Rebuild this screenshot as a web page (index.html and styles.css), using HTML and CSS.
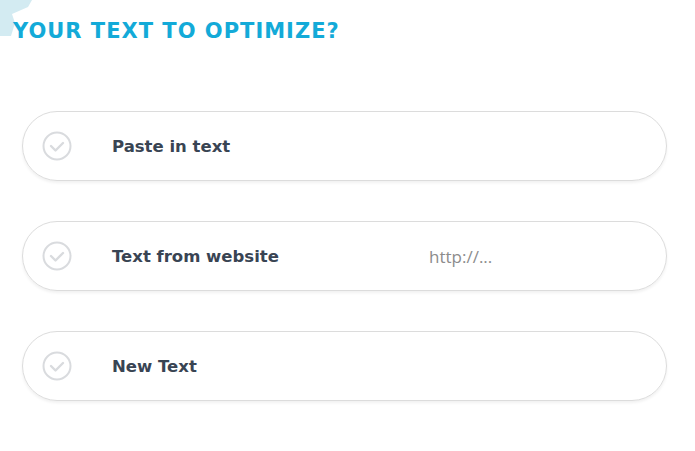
FILE: index.html
```html
<!DOCTYPE html>
<html>
<head>
<meta charset="utf-8">
<link rel="stylesheet" href="styles.css">
</head>
<body>
<svg class="deco" width="40" height="40" viewBox="0 0 40 40"><polygon points="0,0 32,0 28,7 12,14 15,23 11,36 0,36" fill="#d3ebf2"/></svg>
<h1 class="title">YOUR TEXT TO OPTIMIZE?</h1>
<div class="options">
  <div class="option">
    <svg class="check" width="30" height="30" viewBox="0 0 30 30"><circle cx="15" cy="15" r="13.5" fill="none" stroke="#d9dbde" stroke-width="2"/><path d="M9 15 L13.5 19.5 L21 12" fill="none" stroke="#d9dbde" stroke-width="2.4" stroke-linecap="round" stroke-linejoin="round"/></svg>
    <span class="label">Paste in text</span>
  </div>
  <div class="option">
    <svg class="check" width="30" height="30" viewBox="0 0 30 30"><circle cx="15" cy="15" r="13.5" fill="none" stroke="#d9dbde" stroke-width="2"/><path d="M9 15 L13.5 19.5 L21 12" fill="none" stroke="#d9dbde" stroke-width="2.4" stroke-linecap="round" stroke-linejoin="round"/></svg>
    <span class="label">Text from website</span>
    <span class="url">http://...</span>
  </div>
  <div class="option">
    <svg class="check" width="30" height="30" viewBox="0 0 30 30"><circle cx="15" cy="15" r="13.5" fill="none" stroke="#d9dbde" stroke-width="2"/><path d="M9 15 L13.5 19.5 L21 12" fill="none" stroke="#d9dbde" stroke-width="2.4" stroke-linecap="round" stroke-linejoin="round"/></svg>
    <span class="label">New Text</span>
  </div>
</div>
</body>
</html>
```
FILE: styles.css
```css
html, body { margin: 0; padding: 0; background: #fff; }
body { font-family: "DejaVu Sans", "Open Sans", sans-serif; width: 695px; height: 451px; overflow: hidden; position: relative; }
.deco { position: absolute; left: 0; top: 0; }
.title { position: relative; margin: 0; padding: 18px 0 0 13px; font-size: 21px; line-height: 26px; font-weight: 700; color: #13aad8; letter-spacing: 1px; }
.options { display: flex; flex-direction: column; gap: 40px; padding: 67px 0 0 22px; width: 645px; }
.option { height: 68px; border: 1px solid #dcdcdc; border-radius: 35px; box-shadow: 0 2px 3px rgba(0,0,0,0.06); display: flex; align-items: center; padding-left: 19px; }
.check { flex: none; }
.label { margin-left: 40px; width: 317px; font-size: 16.5px; font-weight: 700; color: #394453; }
.url { font-size: 17px; font-weight: 400; color: #8c8c8c; font-family: "Open Sans", sans-serif; }
```
